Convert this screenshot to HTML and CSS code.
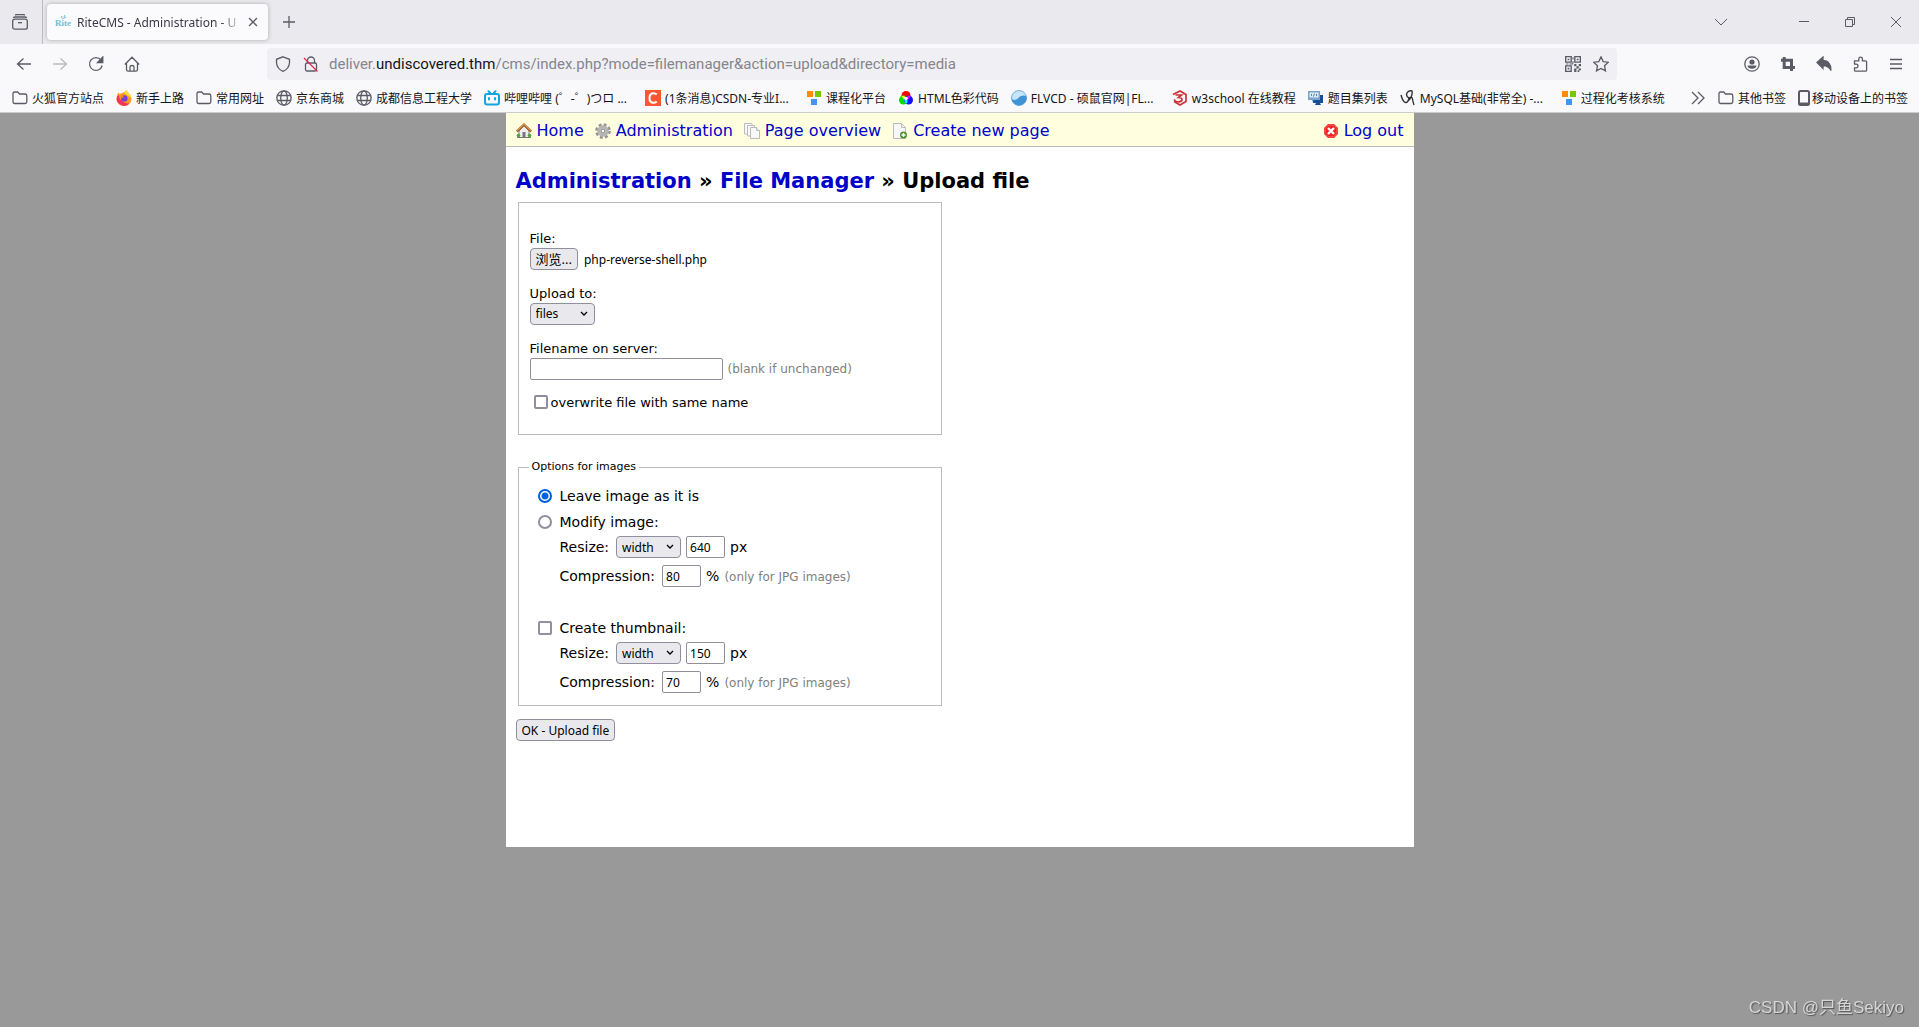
FILE: index.html
```html
<!DOCTYPE html>
<html lang="zh-CN">
<head>
<meta charset="utf-8">
<title>RiteCMS - Administration - Upload file</title>
<link rel="stylesheet" href="styles.css">
</head>
<body>
<header class="chrome">
  <div class="tabs">
    <button class="view" aria-label="View"><svg class="ic" viewBox="0 0 16 16"><path d="M3.500 1.500Q3.500.5 4.500.5h7q1 0 1 1" /><path d="M1.500 4Q1.500 3 3 3h10q1.500 0 1.500 1"/><rect x=".7" y="5.200" width="14.600" height="10" rx="2"/><path d="M6 8.700h4"/></svg></button>
    <div class="tab">
      <svg class="fav" viewBox="0 0 16 16"><text x="0" y="12" class="rite">Rite</text><path d="M6 4l1-2M9 3l1-2M7 5l4-2" class="spark"/></svg>
      <span class="tab-title">RiteCMS - Administration - U</span>
      <button class="tab-close" aria-label="Close tab"><svg viewBox="0 0 10 10"><path d="M1 1l8 8M9 1l-8 8"/></svg></button>
    </div>
    <button class="newtab" aria-label="New tab"><svg viewBox="0 0 12 12"><path d="M6 0v12M0 6h12"/></svg></button>
    <div class="win">
      <button class="listall" aria-label="List tabs"><svg class="w12" viewBox="0 0 12 12"><path d="M0 3l6 6 6-6"/></svg></button>
      <button aria-label="Minimize"><svg class="w12" viewBox="0 0 12 12"><path d="M1 5.500h10"/></svg></button>
      <button aria-label="Restore"><svg class="w12" viewBox="0 0 12 12"><path d="M1.500 3.500h7v7h-7zM3.500 3.500v-2h7v7h-2"/></svg></button>
      <button aria-label="Close"><svg class="w12" viewBox="0 0 12 12"><path d="M1 1l10 10M11 1L1 11"/></svg></button>
    </div>
  </div>

  <div class="toolbar">
    <button class="tool" aria-label="Back"><svg class="ic" viewBox="0 0 16 16"><path d="M1.500 8h13.500M7.500 2.500L1.500 8l6 5.500"/></svg></button>
    <button class="tool dim" aria-label="Forward"><svg class="ic" viewBox="0 0 16 16"><path d="M14.500 8H1M8.500 2.500l6 5.500-6 5.500"/></svg></button>
    <button class="tool" aria-label="Reload"><svg class="ic" viewBox="0 0 16 16"><path d="M14.200 9.500A6.400 6.400 0 1 1 13 4"/><path d="M14.800 1v5.500H9.500z" class="solid"/></svg></button>
    <button class="tool" aria-label="Home"><svg class="ic" viewBox="0 0 16 16"><path d="M.8 8.500L8 1.200l7.200 7.300M2.500 7v6.500q0 1.700 1.700 1.700h7.600q1.700 0 1.700-1.700V7M6 15v-4q0-1.500 2-1.500t2 1.500v4"/></svg></button>
    <div class="urlbar">
      <svg class="ic" viewBox="0 0 16 16"><path d="M8 .8l6.500 2.500v3.500Q14 13 8 15.300 2 13 1.500 6.800V3.300z"/></svg>
      <svg class="ic lock" viewBox="0 0 16 16"><path d="M4.500 7V4.500a3.500 3.500 0 0 1 7 0V7"/><rect x="2.500" y="7" width="11" height="8" rx="1.500"/><path d="M1 2l13.500 13.500" class="slash"/></svg>
      <div class="url">deliver.<b>undiscovered.thm</b>/cms/index.php?mode=filemanager&amp;action=upload&amp;directory=media</div>
      <svg class="ic" viewBox="0 0 14 14"><path class="solid" fill-rule="evenodd" stroke="none" d="M0 0h6v6H0zM1.200 1.200v3.600h3.600V1.200zM8 0h6v6H8zM9.200 1.200v3.600h3.600V1.200zM0 8h6v6H0zM1.200 9.200v3.600h3.600V9.200zM2.300 2.300h1.500v1.500H2.300zM10.300 2.300h1.500v1.500h-1.500zM2.300 10.300h1.500v1.500H2.300zM6.500 1h1v2h-1zM6.500 4.500h1v2h-1zM1 6.500h2v1H1zM4 6.500h3v1H4zM8 7h2v2H8zM12 7h2v2h-2zM10 9h2v2h-2zM8 11h2v3H8zM12 11h2v1.500h-2zM11 12.500h1.500V14H11z"/></svg>
      <svg class="ic" viewBox="0 0 16 16"><path d="M8 .9l2.200 4.700 5.100.6-3.800 3.500 1 5.200L8 12.400l-4.500 2.500 1-5.200L.7 6.200l5.100-.6z"/></svg>
    </div>
    <button class="tool" aria-label="Account"><svg class="ic" viewBox="0 0 16 16"><circle cx="8" cy="8" r="7.200"/><circle cx="8" cy="6" r="2.600" class="solid" stroke="none"/><path d="M3.500 9.500h9Q12 12.800 8 12.800T3.500 9.500z" class="solid" stroke="none"/></svg></button>
    <button class="tool" aria-label="Screenshot"><svg class="ic" viewBox="0 0 16 16"><path d="M4.200 1v10.500H15M1 4.200h10.500V15" class="thick"/></svg></button>
    <button class="tool" aria-label="Undo"><svg class="ic" viewBox="0 0 16 16"><path d="M1 6.500L7 1v3.300q8 0 8 10.200-2.500-5-8-5v3z" class="solid"/></svg></button>
    <button class="tool" aria-label="Extensions"><svg class="ic" viewBox="0 0 16 16"><path d="M2.500 6V4.800h4.300V3a1.800 1.800 0 0 1 3.600 0v1.800h3.200q1 0 1 1v8.400q0 1-1 1H3.500q-1 0-1-1v-2.400h1.700a1.800 1.800 0 0 0 0-3.600H2.500z"/></svg></button>
    <button class="tool" aria-label="Menu"><svg class="ic" viewBox="0 0 16 16"><path d="M2 3.500h12M2 8h12M2 12.500h12"/></svg></button>
  </div>

  <nav class="bookmarks">
    <a href="#"><svg class="ic" viewBox="0 0 16 16"><path d="M1 3.500Q1 2 2.500 2h3.200L7.500 4H13q1.800 0 1.800 1.800v6q0 1.700-1.800 1.700H2.800Q1 13.500 1 11.800z"/></svg>火狐官方站点</a>
    <a href="#"><svg class="ic" viewBox="0 0 16 16"><g stroke="none"><path d="M8.500 2L10.500 0q.8 2.500 2.500 3.500 2.500 2 2.500 5.500A7.500 7 0 1 1 1 6.500Q1 4 2.500 2.500l1 1.500Q6 3 8.500 2z" fill="#ff9a1f"/><path d="M1 6.500a7.400 7.400 0 0 0 12.500 7Q9 14 6 11 3 9 2.500 5z" fill="#f6305d"/><path d="M10.500 0q.8 2.500 2.500 3.500Q15 5 15.300 8L11 5 8 3z" fill="#ffdf3a"/><circle cx="8.300" cy="8.400" r="3.200" fill="#7540d9"/><path d="M4 6q3-1 4 1-2 0-2.500 1.500z" fill="#ff8a16"/></g></svg>新手上路</a>
    <a href="#"><svg class="ic" viewBox="0 0 16 16"><path d="M1 3.500Q1 2 2.500 2h3.200L7.500 4H13q1.800 0 1.800 1.800v6q0 1.700-1.800 1.700H2.800Q1 13.500 1 11.800z"/></svg>常用网址</a>
    <a href="#"><svg class="ic" viewBox="0 0 16 16"><circle cx="8" cy="8" r="7.200"/><ellipse cx="8" cy="8" rx="3.300" ry="7.200"/><path d="M1.500 5.500h13M1.500 10.500h13"/></svg>京东商城</a>
    <a href="#"><svg class="ic" viewBox="0 0 16 16"><circle cx="8" cy="8" r="7.200"/><ellipse cx="8" cy="8" rx="3.300" ry="7.200"/><path d="M1.500 5.500h13M1.500 10.500h13"/></svg>成都信息工程大学</a>
    <a href="#" class="cap"><svg class="ic" viewBox="0 0 16 16"><g stroke="#13a5e2" stroke-width="2" stroke-linecap="round"><rect x="1" y="4" width="14" height="10.500" rx="2"/><path d="M4.500 1.200L6 3M11.500 1.200L10 3M5 8v1.500M11 8v1.500"/></g></svg>哔哩哔哩 (゜-゜)つロ ...</a>
    <a href="#" class="cap"><svg class="ic" viewBox="0 0 16 16"><path d="M0 0h16v16H0z" fill="#fc5531" stroke="none"/><path d="M11.700 4.500Q10.500 3.200 8.500 3.200 4.500 3.200 4.500 8t4 4.800q2 0 3.200-1.300" stroke="#fff" stroke-width="2"/></svg>(1条消息)CSDN-专业I...</a>
    <a href="#"><svg class="ic" viewBox="0 0 16 16"><g stroke="none"><path fill="#ff8c00" d="M1 1h6v6H1z"/><path fill="#76c900" d="M9 1h6v6H9z"/><path fill="#4395f2" d="M5 9h6v6H5z"/></g></svg>课程化平台</a>
    <a href="#"><svg class="ic" viewBox="0 0 16 16"><g stroke="none"><path d="M0 0h16v16H0z" fill="#fff"/><circle cx="8" cy="5.500" r="4.500" fill="#f00"/><circle cx="5.500" cy="10" r="4.500" fill="#0d0"/><circle cx="10.500" cy="10" r="4.500" fill="#11f"/><path d="M3.500 6q3-1 4.500 2l-2.500 1z" fill="#ff0"/><path d="M12.500 6q-3-1-4.500 2l2.500 1z" fill="#f0f"/><path d="M8 7.500q3 4 0 6.500-3-3 0-6.500" fill="#0ff"/><circle cx="8" cy="8.500" r="1.800" fill="#fff"/></g></svg>HTML色彩代码</a>
    <a href="#" class="cap"><svg class="ic" viewBox="0 0 16 16"><circle cx="8" cy="8" r="7.500" fill="#c6e5f8" stroke="#7aaed9" stroke-width="1"/><path d="M.8 9q3.500 2 6-.5 3-4 8.500-2.500 1 5-3 8Q7 17 2.500 13 1 11 .8 9z" fill="#3f93d6" stroke="none"/></svg>FLVCD - 硕鼠官网|FL...</a>
    <a href="#"><svg class="ic" viewBox="0 0 16 16"><g stroke="#cc3338" stroke-width="1.700"><path d="M1 4.500L8 1l6 3.500v7L8 15l-6-3.500"/><path d="M3.500 5h6L6.500 7.500q4 0 3.500 2.500T4 11.500L2 9.500"/></g></svg>w3school 在线教程</a>
    <a href="#"><svg class="ic" viewBox="0 0 16 16"><g stroke="none"><path fill="#164f98" d="M5 5h10v8H5zM8 13h4l1 2H7z"/><path fill="#7ba3cc" d="M0 1h12v9H6l-2 2v-2H0z"/><path fill="#dce8f4" d="M1.500 2.500h9v5h-9z"/></g><path d="M4 4L3 5l1 1M8 4l1 1-1 1M6.500 3.500l-1 3" stroke="#356ba8" stroke-width=".8"/></svg>题目集列表</a>
    <a href="#" class="cap"><svg class="ic" viewBox="0 0 16 16"><path d="M1 5q2 7 4.500 7.500T9 8Q5.500 6 7 3t5-2q1 6-5 11M9 8q3-2 3.500 1t1.500 6" stroke="#333" stroke-width="1.400"/></svg>MySQL基础(非常全) -...</a>
    <a href="#"><svg class="ic" viewBox="0 0 16 16"><g stroke="none"><path fill="#ff8c00" d="M1 1h6v6H1z"/><path fill="#76c900" d="M9 1h6v6H9z"/><path fill="#4395f2" d="M5 9h6v6H5z"/></g></svg>过程化考核系统</a>
    <button class="more" aria-label="More bookmarks"><svg class="ic" viewBox="0 0 16 16"><path d="M2 2l6 6-6 6M8 2l6 6-6 6"/></svg></button>
    <a href="#"><svg class="ic" viewBox="0 0 16 16"><path d="M1 3.500Q1 2 2.500 2h3.200L7.500 4H13q1.800 0 1.800 1.800v6q0 1.700-1.800 1.700H2.800Q1 13.500 1 11.800z"/></svg>其他书签</a>
    <a href="#" class="mobile"><svg class="phone" viewBox="0 0 12 16"><rect x="1" y="1" width="10" height="14" rx="1.500"/><path d="M1 13.500h10"/></svg>移动设备上的书签</a>
  </nav>
</header>

<main class="page">
  <nav class="menu">
    <a href="#"><svg class="mi" viewBox="0 0 16 16"><path d="M1 13.500h14V15H1z" fill="#5ea24a"/><path d="M3 8l5-5 5 5v6.500H3z" fill="#eee" stroke="#777"/><path d="M.7 8.500L8 1.700l7.300 6.800" fill="none" stroke="#a8682b" stroke-width="2.400"/><path d="M1 7.800L8 1.300l7 6.500" fill="none" stroke="#e0a15c"/><path d="M6.500 9h3v5.500h-3z" fill="#777"/><circle cx="2.500" cy="12.500" r="1.800" fill="#55a045"/><circle cx="13.500" cy="12.500" r="1.800" fill="#55a045"/></svg>Home</a>
    <a href="#"><svg class="mi" viewBox="0 0 16 16"><circle cx="8" cy="8" r="6.500" fill="none" stroke="#929292" stroke-width="2.600" stroke-dasharray="2.900 2.200"/><circle cx="8" cy="8" r="4.300" fill="#ccc" stroke="#b4b4b4" stroke-width="3"/><circle cx="8" cy="8" r="1.900" fill="#ffffe0" stroke="#888"/></svg>Administration</a>
    <a href="#"><svg class="mi" viewBox="0 0 16 16"><g fill="#f8f8f8" stroke="#bbb"><path d="M.5.500h7l1 2V11h-8z"/><path d="M3.500 2.500h7v10.500h-7z"/><path d="M6.500 4.500h6l3 3v8h-9z"/><path d="M12.500 4.500v3h3"/></g></svg>Page overview</a>
    <a href="#"><svg class="mi" viewBox="0 0 16 16"><path d="M1.500.5h8l4 4v11h-12z" fill="#f7f7f7" stroke="#bbb"/><path d="M9.500.5v4h4" fill="none" stroke="#bbb"/><circle cx="11.500" cy="12" r="3.500" fill="#4c9134"/><path d="M11.500 10v4M9.500 12h4" stroke="#fff" stroke-width="1.400"/></svg>Create new page</a>
    <a href="#" class="logout"><svg class="mi" viewBox="0 0 16 16"><path d="M5 1h6l4 4v6l-4 4H5l-4-4V5z" fill="#f02020"/><path d="M5.500 2h5L14 5.500v5L10.500 14h-5L2 10.500v-5z" fill="none" stroke="#ff6a60"/><path d="M5 5l6 6M11 5l-6 6" stroke="#fff" stroke-width="2.400"/></svg>Log out</a>
  </nav>
  <form class="content">
    <h1><a href="#">Administration</a> » <a href="#">File Manager</a> » Upload file</h1>
    <div class="box upload">
      <div class="field">
        <label for="browse">File:</label>
        <div class="line"><button type="button" id="browse" class="btn browse">浏览...</button><span class="filename">php-reverse-shell.php</span></div>
      </div>
      <div class="field">
        <label for="dir">Upload to:</label>
        <div class="line"><select id="dir"><option>files</option><option>media</option></select></div>
      </div>
      <div class="field">
        <label for="fname">Filename on server:</label>
        <div class="line"><input type="text" id="fname" class="wide"><span class="hint">(blank if unchanged)</span></div>
      </div>
      <label class="over"><input type="checkbox">overwrite file with same name</label>
    </div>

    <fieldset class="box options">
      <legend>Options for images</legend>
      <label class="opt"><input type="radio" name="mode" checked>Leave image as it is</label>
      <label class="opt"><input type="radio" name="mode">Modify image:</label>
      <div class="sub"><label for="r1">Resize:</label><select id="r1"><option>width</option><option>height</option></select><input type="text" value="640" aria-label="Image size"><span>px</span></div>
      <div class="sub tall"><label for="c1">Compression:</label><input type="text" id="c1" value="80"><span>%</span><span class="hint">(only for JPG images)</span></div>
      <label class="opt thumb"><input type="checkbox">Create thumbnail:</label>
      <div class="sub"><label for="r2">Resize:</label><select id="r2"><option>width</option><option>height</option></select><input type="text" value="150" aria-label="Thumbnail size"><span>px</span></div>
      <div class="sub tall"><label for="c2">Compression:</label><input type="text" id="c2" value="70"><span>%</span><span class="hint">(only for JPG images)</span></div>
    </fieldset>
    <button type="button" class="btn submit">OK - Upload file</button>
  </form>
</main>
<div class="mark">CSDN @只鱼Sekiyo</div>
</body>
</html>
```

FILE: styles.css
```css
* { box-sizing: border-box; }
body {
  margin: 0;
  min-height: 100vh;
  background: #999;
  font-family: "DejaVu Sans", sans-serif;
  color: #000;
}
button { border: 0; padding: 0; background: none; font: inherit; color: inherit; }
a { text-decoration: none; color: #0000c8; }

/* browser chrome */
.chrome {
  background: #f9f9fb;
  border-bottom: 1px solid #ccc;
  font-family: "Noto Sans", "Noto Sans CJK SC", sans-serif;
  font-size: 12px;
  color: #15141a;
}
.chrome svg { flex: none; display: block; fill: none; stroke: #5b5b66; stroke-width: 1.3; }
.chrome .solid { fill: #5b5b66; }
.chrome .thick { stroke-width: 3; }
.ic { width: 16px; height: 16px; }
.tabs { display: flex; align-items: center; height: 44px; background: #eaeaee; }
.view { display: flex; align-items: center; width: 43px; height: 44px; padding-left: 12px; border-right: 1px solid #bbbbc2; }
.tab {
  display: flex; align-items: center;
  width: 221px; height: 36px; margin-left: 4px; padding: 0 8px;
  background: #fbfbfe; border-radius: 4px; box-shadow: 0 0 4px #aaa;
}
.fav { width: 16px; height: 16px; }
.chrome .rite { font: bold 9px "Liberation Serif", serif; fill: #6fc0d4; stroke: none; }
.chrome .spark { stroke: #8cc8d8; }
.tab-title {
  flex: 1; margin-left: 6px; white-space: nowrap; color: #3a3944;
  mask-image: linear-gradient(to left, transparent, #000 24px);
}
.tab-close { padding: 0 2px; margin-left: 2px; }
.tab-close svg { width: 10px; height: 10px; }
.newtab { width: 42px; display: flex; justify-content: center; }
.newtab svg, .w12 { width: 12px; height: 12px; }
.win { display: flex; margin-left: auto; }
.win button { display: flex; justify-content: center; width: 46px; }
.win .listall { margin-right: 37px; }
.chrome .win svg { stroke-width: 1; }
.toolbar { display: flex; align-items: center; height: 40px; padding: 0 5px 0 6px; }
.tool { display: flex; justify-content: center; width: 36px; }
.dim { opacity: .4; }
.urlbar {
  flex: 1; display: flex; align-items: center; gap: 12px;
  height: 32px; margin: 0 117px; padding: 0 8px;
  background: #f0f0f4; border-radius: 4px;
}
.url {
  flex: 1; margin: 0 -2px; overflow: hidden; white-space: nowrap;
  font-family: Roboto, "Noto Sans", sans-serif; font-size: 15px; line-height: 24px; color: #85858d;
}
.url b { font-weight: 400; color: #15141a; }
.chrome .slash { stroke: #e22850; }
.bookmarks { display: flex; height: 28px; padding: 0 0 0 12px; }
.bookmarks a { display: flex; align-items: center; gap: 4px; margin-right: 12px; color: #15141a; white-space: nowrap; }
.bookmarks .cap { width: 149px; }
.more { margin-left: auto; margin-right: 12px; }
.phone { width: 12px; height: 16px; }
.chrome .phone { stroke-width: 2; }
.bookmarks .mobile { gap: 2px; margin-right: 11px; }

/* CMS page */
.page { max-width: 908px; min-height: 734px; margin: 0 auto; background: #fff; }
.menu {
  display: flex; align-items: center; gap: 11px;
  height: 34px; padding: 2px 10px 0;
  background: #ffffe0; border-bottom: 1px solid #bbb;
  font-size: 16px;
}
.menu a { display: flex; align-items: center; gap: 5px; white-space: nowrap; }
.mi { width: 16px; height: 16px; flex: none; }
.menu .logout { margin-left: auto; }
.content { padding: 21px 10px 24px; }
h1 { margin: 0 0 8px; font-size: 21px; line-height: 26px; font-weight: 700; }
.box { width: 424px; max-width: 100%; margin: 0 2px; border: 1px solid #bbb; }
.upload { padding: 27px 11px 25px; font-size: 13px; line-height: 17px; }
.field { margin-bottom: 15px; }
.field label { display: block; }
.line { display: flex; align-items: center; height: 23px; }
.filename { margin-left: 6px; padding-top: 2px; font-family: "Noto Sans", sans-serif; font-size: 12px; }
.hint { padding-top: 1px; font-size: 12px; color: #808080; }
.line .hint { margin-left: 5px; }
.over { display: flex; align-items: center; gap: 3px; height: 14px; padding-left: 4px; }
.btn, select, input[type="text"] {
  height: 22px; margin: 0;
  border: 1px solid #8f8f9d; border-radius: 4px;
  font-family: "Noto Sans", "Noto Sans CJK SC", sans-serif; font-size: 12px; color: #000;
}
.btn { padding: 0 5px; background: #e9e9ed; white-space: nowrap; }
.browse { font-size: 13px; line-height: 18px; }
select {
  appearance: none; width: 65px; padding: 0 5px;
  background: #e9e9ed url("data:image/svg+xml,%3Csvg xmlns='http://www.w3.org/2000/svg' width='8' height='6'%3E%3Cpath d='M1 1l3 3 3-3' fill='none' stroke='%23000' stroke-width='1.300'/%3E%3C/svg%3E") no-repeat right 6px center;
}
input[type="text"] { width: 39px; padding: 0 3px; border-radius: 2px; background: #fff; }
.line .wide { width: 193px; }
input[type="checkbox"], input[type="radio"] {
  appearance: none; flex: none; width: 14px; height: 14px; margin: 0;
  border: 2px solid #8f8f9d; border-radius: 2px; background: #fff;
}
input[type="radio"] { border-radius: 50%; }
input[type="radio"]:checked { border-color: #0061e0; background: radial-gradient(circle, #0061e0 3px, #fff 4px); }
.options { margin-top: 25px; padding: 9px 10px 6px; font-size: 14px; }
legend { padding: 0 3px; font-size: 11px; line-height: 14px; }
.opt { display: flex; align-items: center; gap: 8px; height: 26px; padding-left: 9px; }
.thumb { margin-top: 22px; }
.sub { display: flex; align-items: center; gap: 5px; height: 24px; padding-left: 31px; }
.sub label { margin-right: 2px; }
.tall { height: 34px; }
.submit { display: block; margin-top: 13px; }
.mark {
  position: fixed; right: 15px; bottom: 7px;
  font: 17px/24px "Liberation Sans", "Noto Sans CJK SC", sans-serif;
  color: #d6d6d6; text-shadow: 1px 1px 1px #555;
}
```
